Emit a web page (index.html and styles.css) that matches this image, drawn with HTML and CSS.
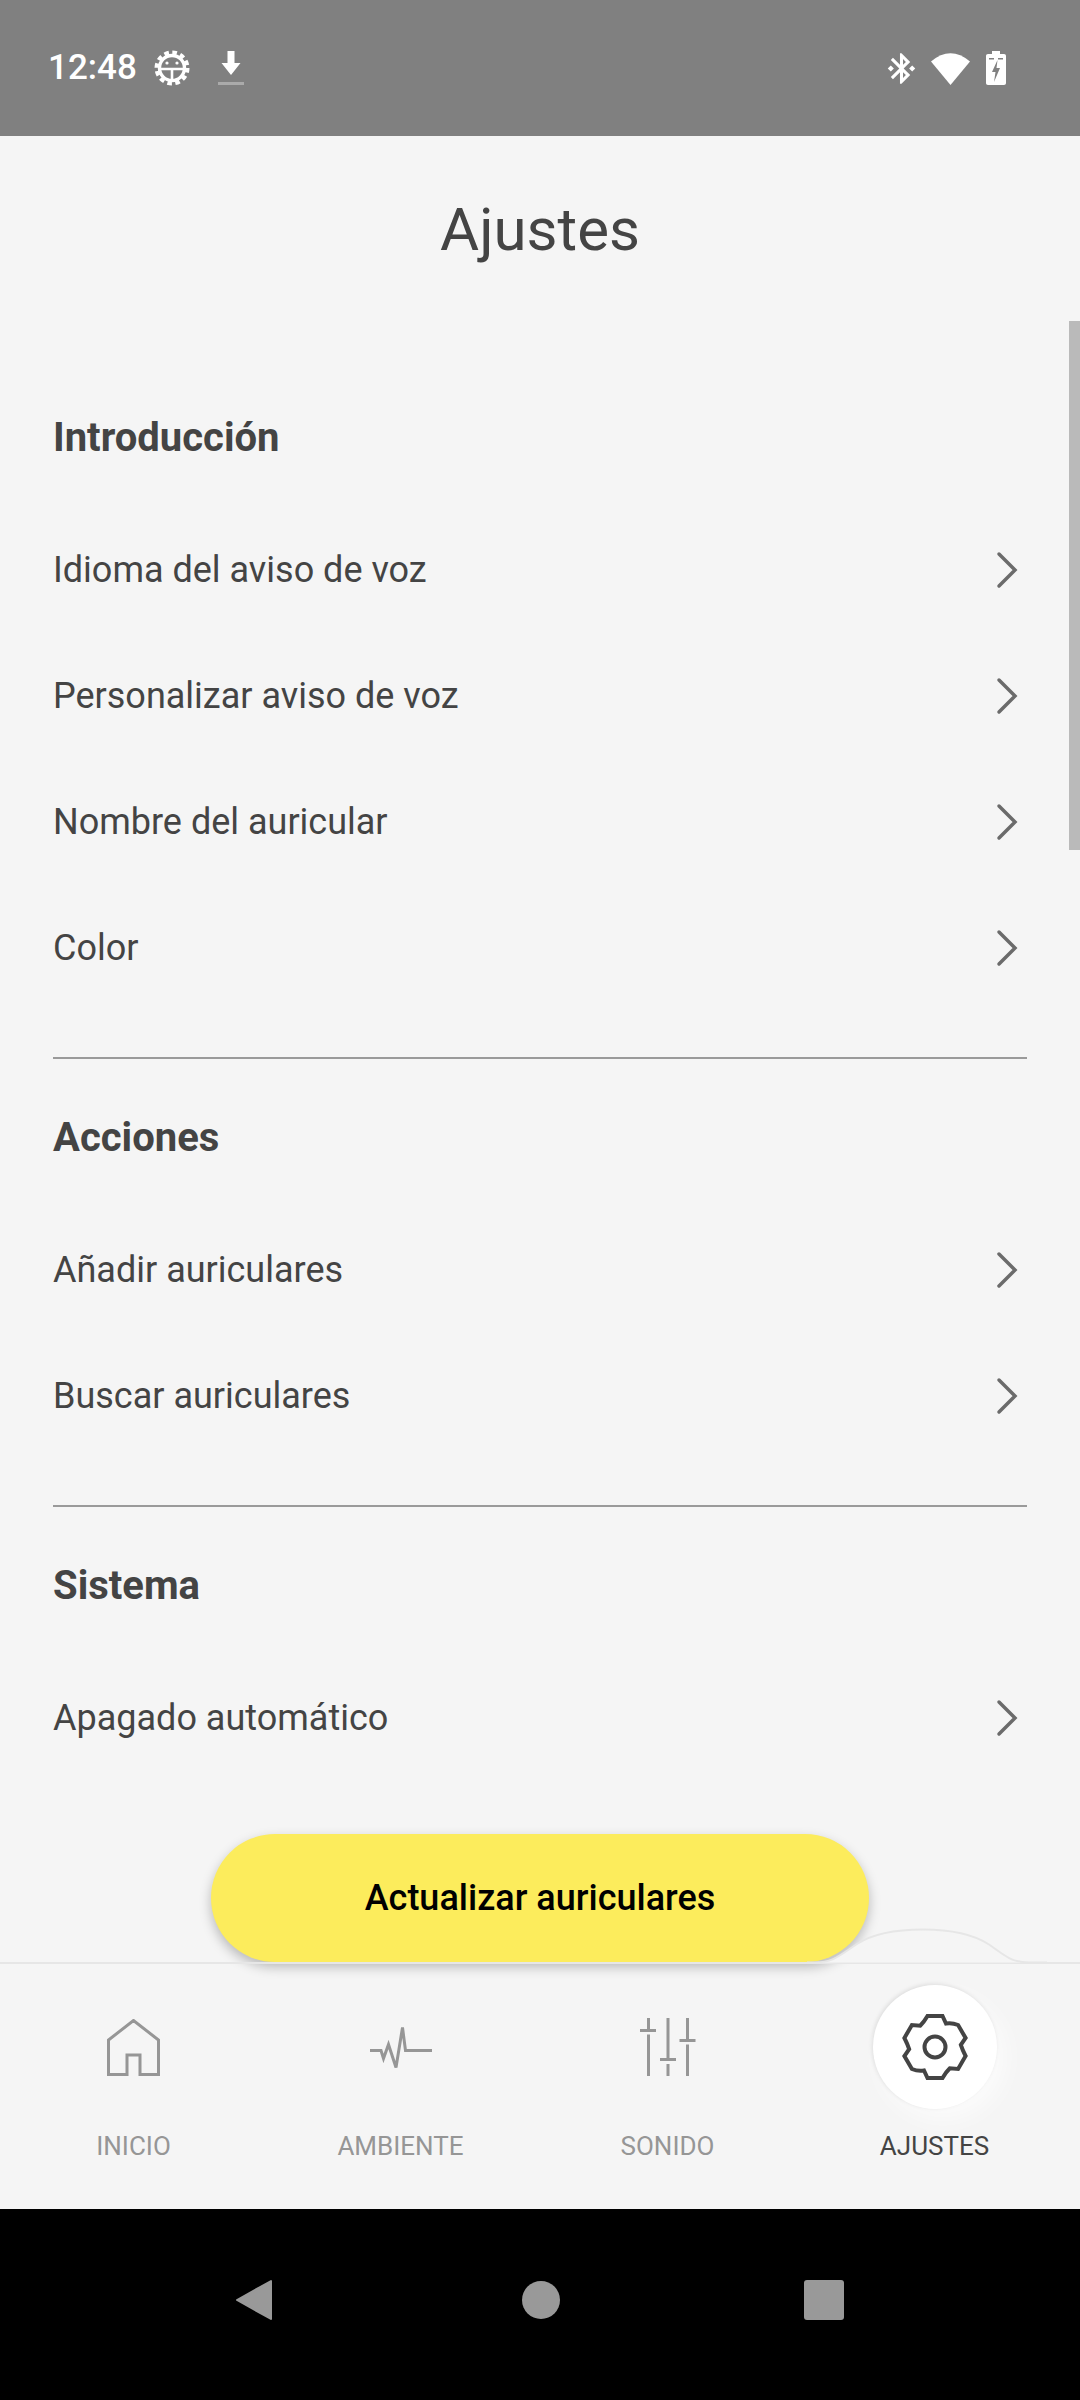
FILE: index.html
```html
<!DOCTYPE html>
<html lang="es">
<head>
  <meta charset="UTF-8">
  <meta name="viewport" content="width=device-width, initial-scale=1.0">
  <title>Ajustes</title>
  <link rel="stylesheet" href="styles.css">
</head>
<body>
  <div class="phone">
    <div class="status-bar">
      <span class="clock">12:48</span>
      <svg class="icon-system" viewBox="0 0 36 36">
        <circle cx="18" cy="18" r="12.5" fill="none" stroke="#fff" stroke-width="3.4"/>
        <circle cx="18" cy="18" r="15.5" fill="none" stroke="#fff" stroke-width="4" stroke-dasharray="4.6 3.5"/>
        <path d="M6 19h24M18 19v11" stroke="#fff" stroke-width="2.6" fill="none"/>
        <circle cx="13" cy="13" r="1.6" fill="#fff"/>
        <circle cx="23" cy="13" r="1.6" fill="#fff"/>
      </svg>
      <svg class="icon-download" viewBox="0 0 26 36">
        <path d="M9.5 1h7v12h6L13 25 3.500 13h6z" fill="#fff"/>
        <rect x="0" y="32" width="26" height="3" fill="#aaa"/>
      </svg>
      <div class="status-right">
        <svg class="icon-bt" viewBox="2.500 2 19 20">
          <path fill="#fff" d="M7 12l-2-2-2 2 2 2 2-2zm10.71-4.290L12 2h-1v7.590L6.410 5 5 6.410 10.590 12 5 17.590 6.410 19 11 14.410V22h1l5.710-5.710-4.300-4.290 4.300-4.290zM13 5.830l1.880 1.880L13 9.590V5.830zm1.880 10.460L13 18.170v-3.760l1.880 1.880zM19 10l-2 2 2 2 2-2-2-2z"/>
        </svg>
        <svg class="icon-wifi" viewBox="0 0 39 33">
          <path fill="#fff" d="M0 9.500Q19.500 -7 39 9.500L19.500 33z"/>
        </svg>
        <svg class="icon-battery" viewBox="0 0 20 34">
          <path fill="#fff" d="M6 0h8v3h4c1.200 0 2 .8 2 2v27c0 1.200-.8 2-2 2H2c-1.200 0-2-.8-2-2V5c0-1.200.8-2 2-2h4z"/>
          <path fill="#808080" d="M3 7h5v1.500H3zM12 7h5v1.500h-5zM11.500 9L6 21h3.500L8 31l6-14h-3.500z"/>
        </svg>
      </div>
    </div>

    <div class="content">
      <div class="scrollbar"></div>
      <h1 class="page-title">Ajustes</h1>

      <section class="section section-first">
        <h2>Introducción</h2>
        <ul class="rows">
          <li>Idioma del aviso de voz <svg class="chevron" viewBox="0 0 22 38"><path d="M3 3l16 16L3 35"/></svg></li>
          <li>Personalizar aviso de voz <svg class="chevron" viewBox="0 0 22 38"><path d="M3 3l16 16L3 35"/></svg></li>
          <li>Nombre del auricular <svg class="chevron" viewBox="0 0 22 38"><path d="M3 3l16 16L3 35"/></svg></li>
          <li>Color <svg class="chevron" viewBox="0 0 22 38"><path d="M3 3l16 16L3 35"/></svg></li>
        </ul>
      </section>

      <section class="section">
        <h2>Acciones</h2>
        <ul class="rows">
          <li>Añadir auriculares <svg class="chevron" viewBox="0 0 22 38"><path d="M3 3l16 16L3 35"/></svg></li>
          <li>Buscar auriculares <svg class="chevron" viewBox="0 0 22 38"><path d="M3 3l16 16L3 35"/></svg></li>
        </ul>
      </section>

      <section class="section">
        <h2>Sistema</h2>
        <ul class="rows">
          <li>Apagado automático <svg class="chevron" viewBox="0 0 22 38"><path d="M3 3l16 16L3 35"/></svg></li>
        </ul>
      </section>

      <div class="update-wrap">
        <button class="update-btn">Actualizar auriculares</button>
      </div>
    </div>

    <nav class="tabbar">
      <svg class="tab-curve" viewBox="0 0 240 36">
        <path d="M0 34.500h8C26 34.500 32 28 50 16 70 3 100 1.500 116 1.500s46 2 66 15c16 11 22 18 40 18h18"/>
      </svg>
      <div class="tab">
        <div class="tab-icon">
          <svg width="53" height="57" viewBox="0 0 53 57"><path d="M1.500 55.500V21L26.500 1.500 51.500 21v34.500H33V36H20v19.500z"/></svg>
        </div>
        <span>INICIO</span>
      </div>
      <div class="tab">
        <div class="tab-icon">
          <svg width="62" height="43" viewBox="0 0 62 43"><path d="M0 24.500h11l2.500 8 5-14 7.500 23 6.500-40 3 23H62"/></svg>
        </div>
        <span>AMBIENTE</span>
      </div>
      <div class="tab">
        <div class="tab-icon">
          <svg width="56" height="58" viewBox="0 0 56 58"><path d="M8.500 0v11M0 12.500h16M8.500 16.500V58M28 0v40M20 41.500h16M28 46v12M47.500 0v21M39.500 22.500h16M47.500 26.500V58"/></svg>
        </div>
        <span>SONIDO</span>
      </div>
      <div class="tab tab-active">
        <div class="tab-icon">
          <svg width="66" height="68" viewBox="-33 -34 66 68"><path d="M-7.500 -31H7.500L11 -23.500Q17 -24.500 23.100 -22L30.600 -9 25.850 -2.200Q27.500 3 30.600 9L23.100 22 14.850 21.300Q11 25 7.500 31H-7.500L-11 23.500Q-17 24.500 -23.100 22L-30.600 9 -25.850 2.200Q-27.500 -3 -30.600 -9L-23.100 -22 -14.850 -21.300Q-11 -25 -7.500 -31z"/><circle r="10.500"/></svg>
        </div>
        <span>AJUSTES</span>
      </div>
    </nav>

    <div class="android-nav">
      <svg class="nav-back" viewBox="0 0 38 42"><path d="M36 2v38L2 21z"/></svg>
      <div class="nav-home"></div>
      <div class="nav-recent"></div>
    </div>
  </div>
</body>
</html>
```

FILE: styles.css
```css
* {
  box-sizing: border-box;
}
body {
  margin: 0;
  font-family: Roboto, "Liberation Sans", sans-serif;
  background-color: #f5f5f5;
  color: #444;
}
.phone {
  width: 1080px;
  height: 2400px;
  display: flex;
  flex-direction: column;
  overflow: hidden;
}

/* status bar */
.status-bar {
  height: 136px;
  flex-shrink: 0;
  background-color: #808080;
  display: flex;
  align-items: center;
  padding: 0 74px 0 48px;
  color: #fff;
}
.clock {
  font-size: 35px;
  font-weight: 500;
  margin-top: -1px;
}
.icon-system {
  width: 36px;
  height: 36px;
  margin-left: 17px;
  margin-top: -1px;
}
.icon-download {
  width: 26px;
  height: 36px;
  margin-left: 28px;
  margin-top: -1px;
}
.status-right {
  margin-left: auto;
  display: flex;
  align-items: center;
}
.icon-bt {
  width: 29px;
  height: 33px;
}
.icon-wifi {
  width: 39px;
  height: 33px;
  margin-left: 15px;
}
.icon-battery {
  width: 20px;
  height: 34px;
  margin-left: 16px;
}

/* main list */
.content {
  position: relative;
  flex: 1;
}
.scrollbar {
  position: absolute;
  top: 185px;
  right: 0;
  width: 11px;
  height: 529px;
  background-color: #bababa;
}
.page-title {
  margin: 0;
  height: 188px;
  line-height: 188px;
  text-align: center;
  font-size: 60px;
  font-weight: 400;
}
.section {
  margin: 0 53px;
  padding-top: 49px;
  padding-bottom: 46px;
  border-bottom: 2px solid #9a9a9a;
}
.section-first {
  padding-top: 84px;
}
.section:last-of-type {
  border-bottom: none;
  padding-bottom: 0;
}
.section h2 {
  margin: 0 0 39px;
  height: 60px;
  line-height: 60px;
  font-size: 40px;
  font-weight: 700;
}
.rows {
  list-style-type: none;
  margin: 0;
  padding: 0;
}
.rows li {
  height: 126px;
  display: flex;
  align-items: center;
  justify-content: space-between;
  font-size: 36px;
  padding-right: 9px;
}
.chevron {
  width: 22px;
  height: 38px;
  fill: none;
  stroke: #6b6b6b;
  stroke-width: 3.5;
  stroke-linecap: round;
  stroke-linejoin: miter;
}
.update-wrap {
  display: flex;
  justify-content: center;
  margin-top: 53px;
}
.update-btn {
  width: 658px;
  height: 128px;
  border: none;
  border-radius: 64px;
  background-color: #fcec5c;
  color: #000;
  font-family: inherit;
  font-size: 36px;
  font-weight: 500;
  box-shadow: 0 5px 12px rgba(0, 0, 0, 0.25);
}

/* bottom tabs */
.tabbar {
  position: relative;
  height: 247px;
  flex-shrink: 0;
  display: grid;
  grid-template-columns: repeat(4, 267px);
  padding-top: 21px;
  border-top: 2px solid #e6e6e6;
}
.tab-curve {
  position: absolute;
  left: 807px;
  top: -36px;
  width: 240px;
  height: 36px;
  fill: #f5f5f5;
  stroke: #e6e6e6;
  stroke-width: 2;
}
.tab {
  display: flex;
  flex-direction: column;
  align-items: center;
  font-size: 26px;
  line-height: 32px;
  color: #969696;
}
.tab-icon {
  width: 124px;
  height: 124px;
  margin-bottom: 21px;
  border-radius: 50%;
  display: flex;
  align-items: center;
  justify-content: center;
}
.tab-icon svg {
  fill: none;
  stroke: #969696;
  stroke-width: 3;
}
.tab-active {
  color: #444;
}
.tab-active .tab-icon {
  background-color: #fff;
  box-shadow: -1px -1px 4px rgba(0, 0, 0, 0.1), 8px 10px 24px rgba(255, 255, 255, 0.7);
}
.tab-active .tab-icon svg {
  stroke: #444;
  stroke-width: 4;
}

/* android navigation */
.android-nav {
  flex: 1;
  background-color: #000;
  position: relative;
  display: flex;
  align-items: center;
  padding-bottom: 10px;
}
.nav-back {
  width: 38px;
  height: 42px;
  margin-left: 235px;
  fill: #999;
  stroke: #999;
  stroke-width: 2;
  stroke-linejoin: round;
}
.nav-home {
  width: 38px;
  height: 38px;
  margin-left: 249px;
  border-radius: 50%;
  background-color: #999;
}
.nav-recent {
  width: 40px;
  height: 40px;
  margin-left: 244px;
  border-radius: 3px;
  background-color: #999;
}
```
